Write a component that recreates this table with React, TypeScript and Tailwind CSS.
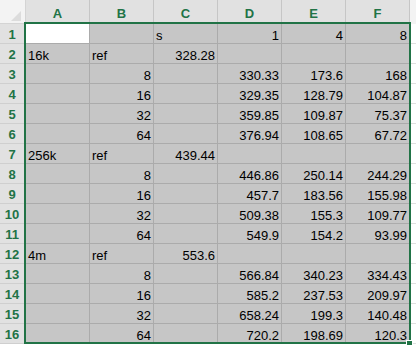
import React from 'react'

const cols = ['A', 'B', 'C', 'D', 'E', 'F']

type Cell = string | number | null

const rows: Cell[][] = [
  [null, null, 's', 1, 4, 8],
  ['16k', 'ref', 328.28, null, null, null],
  [null, 8, null, 330.33, 173.6, 168],
  [null, 16, null, 329.35, 128.79, 104.87],
  [null, 32, null, 359.85, 109.87, 75.37],
  [null, 64, null, 376.94, 108.65, 67.72],
  ['256k', 'ref', 439.44, null, null, null],
  [null, 8, null, 446.86, 250.14, 244.29],
  [null, 16, null, 457.7, 183.56, 155.98],
  [null, 32, null, 509.38, 155.3, 109.77],
  [null, 64, null, 549.9, 154.2, 93.99],
  ['4m', 'ref', 553.6, null, null, null],
  [null, 8, null, 566.84, 340.23, 334.43],
  [null, 16, null, 585.2, 237.53, 209.97],
  [null, 32, null, 658.24, 199.3, 140.48],
  [null, 64, null, 720.2, 198.69, 120.3],
]

function Corner() {
  return (
    <div className="h-[24px] bg-[#f3f3f3] border-r border-b border-[#d4d4d4] relative">
      <svg width="24" height="23" className="absolute left-0 top-0">
        <polygon points="21,11 21,21 11,21" fill="#dcdcdc" />
      </svg>
    </div>
  )
}

export default function App() {
  return (
    <div
      className="relative w-[416px] h-[345px] overflow-hidden bg-white text-black"
      style={{ fontFamily: '"Liberation Sans", Arial, sans-serif' }}
    >
      <div className="grid grid-cols-[26px_repeat(6,64px)_1fr]">
        {/* Column headers */}
        <Corner />
        {cols.map((c) => (
          <div
            key={c}
            className="h-[24px] bg-[#e1e1e1] border-r border-[#c6c6c6] text-center text-[13px] leading-[16px] pt-[6px] font-bold text-[#217346]"
          >
            {c}
          </div>
        ))}
        <div className="h-[24px] bg-[#f3f3f3]" />

        {/* Body */}
        {rows.map((row, i) => (
          <React.Fragment key={i}>
            <div className="h-[20px] bg-[#e1e1e1] border-b border-[#cfcfcf] pr-[2px] text-center text-[13px] leading-[16px] pt-[3px] font-bold text-[#217346]">
              {i + 1}
            </div>
            {row.map((v, j) => {
              const isNum = typeof v === 'number'
              const active = i === 0 && j === 0
              return (
                <div
                  key={j}
                  className={`h-[20px] border-r border-b border-[#ababab] text-[13px] leading-[16px] pt-[4px] px-[2px] whitespace-nowrap overflow-hidden ${
                    active ? 'bg-white' : 'bg-[#c6c6c6]'
                  } ${isNum ? 'text-right' : 'text-left'}`}
                >
                  {v ?? ''}
                </div>
              )
            })}
            <div className="h-[20px] bg-white border-b border-[#e0e0e0]" />
          </React.Fragment>
        ))}
      </div>

      {/* selection outline */}
      <div className="absolute left-[24px] top-[22px] w-[387px] h-[322px] border-2 border-[#217346]" />
      <div className="absolute left-[406px] top-[340px] w-[7px] h-[7px] bg-[#217346] border border-white" />
    </div>
  )
}
